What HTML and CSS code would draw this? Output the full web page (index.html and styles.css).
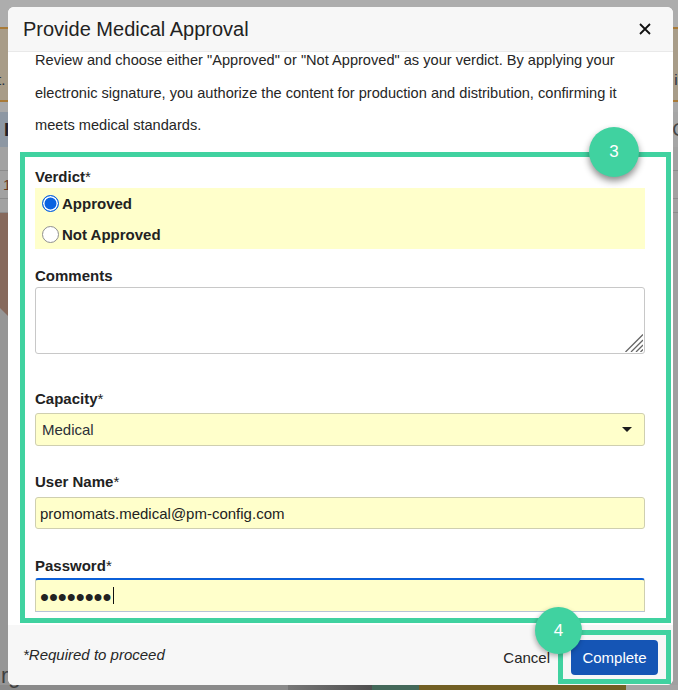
FILE: index.html
```html
<!DOCTYPE html>
<html lang="en">
<head>
<meta charset="utf-8">
<title>Provide Medical Approval</title>
<link rel="stylesheet" href="styles.css">
</head>
<body>
<div class="backdrop">
  <div class="bg-top"></div>
  <div class="bg-banner"><span class="bg-t1">t.</span><span class="bg-t2">in</span></div>
  <div class="bg-gap"></div>
  <div class="bg-bar"><span class="bg-b1">I</span><span class="bg-b2">C</span></div>
  <div class="bg-row"></div>
  <div class="bg-row bg-row-num"><span>1</span></div>
  <div class="bg-row bg-row-thin"></div>
  <div class="bg-photo"></div>
  <div class="bg-word">rg</div>
  <div class="bg-strip"><i class="s1"></i><i class="s2"></i><i class="s3"></i><i class="s4"></i></div>
</div>

<div class="modal">
  <header class="modal-head">
    <h1 class="modal-title">Provide Medical Approval</h1>
    <button class="close" type="button" aria-label="Close">
      <svg width="12" height="12" viewBox="0 0 12 12"><path d="M1 1l10 10M11 1L1 11" stroke="#111" stroke-width="1.8" fill="none"/></svg>
    </button>
  </header>
  <div class="modal-body">
    <p class="intro">Review and choose either "Approved" or "Not Approved" as your verdict. By applying your electronic signature, you authorize the content for production and distribution, confirming it meets medical standards.</p>
    <form class="form">
      <div class="label verdict-label">Verdict<span class="req">*</span></div>
      <div class="radios">
        <label class="radio"><input type="radio" name="verdict" checked>Approved</label>
        <label class="radio"><input type="radio" name="verdict">Not Approved</label>
      </div>
      <label class="label comments-label" for="comments">Comments</label>
      <div class="area-wrap">
        <textarea id="comments" class="area"></textarea>
        <svg class="grip" width="18" height="18" viewBox="0 0 18 18"><path d="M0.5 18L18 0.5M6 18L18 6M11 18l7-7M15.5 18l2.5-2.5" stroke="#666" stroke-width="1.3" fill="none"/></svg>
      </div>
      <label class="label capacity-label" for="capacity">Capacity<span class="req">*</span></label>
      <div class="select-wrap">
        <select id="capacity" class="select"><option>Medical</option></select>
        <span class="caret-down"></span>
      </div>
      <label class="label user-label" for="user">User Name<span class="req">*</span></label>
      <input id="user" class="input" type="text" value="promomats.medical@pm-config.com">
      <label class="label pass-label" for="pass">Password<span class="req">*</span></label>
      <div class="pass-wrap">
        <input id="pass" class="input input-focus" type="password" value="abcdefgh">
        <span class="text-caret"></span>
      </div>
    </form>
  </div>
  <footer class="modal-foot">
    <em class="note">*Required to proceed</em>
    <div class="actions">
      <button class="cancel" type="button">Cancel</button>
      <button class="complete" type="button">Complete</button>
    </div>
  </footer>
</div>

<div class="mark mark-form"></div>
<div class="mark mark-btn"></div>
<div class="badge badge-3">3</div>
<div class="badge badge-4">4</div>
</body>
</html>
```
FILE: styles.css
```css
* { box-sizing: border-box; }
html, body { margin: 0; height: 100%; }
body {
  position: relative;
  width: 678px;
  height: 690px;
  overflow: hidden;
  font-family: "Liberation Sans", Arial, sans-serif;
  color: #222;
  background: #a9a9a9;
}

/* dimmed page behind the dialog */
.backdrop {
  position: absolute;
  inset: 0;
  isolation: isolate;
  display: flex;
  flex-direction: column;
  background: linear-gradient(to right, #969696 0 30px, #a0a0a0 30px);
  overflow: hidden;
}
.bg-top { height: 27px; background: #adadad; flex: none; }
.bg-banner {
  height: 75px;
  flex: none;
  display: flex;
  justify-content: space-between;
  align-items: center;
  padding-top: 30px;
  background: #a89c88;
  border-top: 2px solid #a87a38;
  border-bottom: 2px solid #a87a38;
  font-size: 15px;
  color: #263040;
}
.bg-t1 { margin-left: -3px; }
.bg-t2 { margin-right: -8px; }
.bg-gap { height: 10px; background: #a9a9a9; flex: none; }
.bg-bar {
  height: 35px;
  flex: none;
  display: flex;
  justify-content: space-between;
  align-items: center;
  background: #a6a6a6;
  font-size: 19px;
  font-weight: bold;
  color: #222;
}
.bg-b1 { width: 30px; height: 100%; padding-left: 4px; line-height: 35px; background: #8d97a3; }
.bg-b2 { color: #444; font-weight: normal; margin-right: -8px; }
.bg-row { height: 24px; flex: none; background: #a2a2a2; border-bottom: 1px solid #8c8c8c; }
.bg-row-num { height: 28px; font-size: 15px; color: #6b3a20; padding: 5px 0 0 3px; }
.bg-row-thin { height: 14px; }
.bg-photo {
  width: 30px;
  height: 140px;
  flex: none;
  background: #86695c;
  clip-path: polygon(0 0, 100% 0, 100% 125px, 0 95px);
}
.bg-word {
  flex: 1;
  display: flex;
  align-items: flex-end;
  position: relative;
  z-index: 1;
  margin: 0 0 -2px 1px;
  font-size: 22px;
  line-height: 1;
  color: #3f3f3f;
}
.bg-strip { height: 5px; flex: none; display: flex; background: #8a8a8a; }
.bg-strip .s1 { margin-left: 288px; width: 84px; background: linear-gradient(to right, #777, #4f4f4f); }
.bg-strip .s2 { width: 47px; background: #44695a; }
.bg-strip .s3 { width: 207px; background: #725f24; }
.bg-strip .s4 { flex: 1; background: #a4a4a4; }

/* dialog */
.modal {
  position: absolute;
  left: 8px;
  top: 7px;
  width: 665px;
  height: 678px;
  display: flex;
  flex-direction: column;
  background: #fff;
  border-radius: 6px;
  overflow: hidden;
}
.modal-head {
  flex: none;
  height: 45px;
  display: flex;
  align-items: center;
  justify-content: space-between;
  padding: 0 22px 0 15px;
  background: #f7f7f7;
  border-bottom: 1px solid #e9e9e9;
}
.modal-title { margin: 0; font-size: 20px; font-weight: normal; color: #222; }
.close { display: flex; padding: 0; border: 0; background: none; }

.modal-body { flex: 1; min-height: 0; overflow: hidden; padding: 0 28px 0 27px; }
.intro { margin: -8px 0 0; font-size: 14.6px; line-height: 32.5px; color: #262626; }

.form { display: flex; flex-direction: column; margin-top: 26px; }
.label { display: block; font-size: 15px; font-weight: bold; line-height: 17px; color: #222; }
.req { font-weight: normal; }
.radios { height: 61px; margin-top: 3px; background: #ffffcb; padding-left: 7px; display: flex; flex-direction: column; }
.radio { display: flex; align-items: center; flex: none; height: 31px; font-size: 15px; font-weight: bold; color: #222; }
.radio input {
  appearance: none;
  width: 17px;
  height: 17px;
  margin: 0 3px 0 0;
  flex: none;
  border: 1px solid #8f8f8f;
  border-radius: 50%;
  background: #fff;
}
.radio input:checked {
  border: 1.5px solid #0b63e0;
  background: #0b63e0;
  box-shadow: inset 0 0 0 1.5px #fff;
}
.comments-label { margin-top: 18px; }
.area-wrap { position: relative; margin-top: 3px; height: 67px; }
.area {
  display: block;
  width: 100%;
  height: 100%;
  resize: none;
  border: 1px solid #c8c8c8;
  border-radius: 3px;
  background: #fff;
  outline: 0;
}
.grip { position: absolute; right: 2px; bottom: 2px; }
.capacity-label { margin-top: 36px; }
.select-wrap { position: relative; margin-top: 6px; height: 33px; }
.select {
  display: block;
  width: 100%;
  height: 100%;
  padding: 1px 0 0 6px;
  appearance: none;
  border: 1px solid #cfcfb0;
  border-radius: 3px;
  background: #ffffcb;
  font: 15px "Liberation Sans", Arial, sans-serif;
  color: #2c3038;
}
.caret-down {
  position: absolute;
  right: 13px;
  top: 14px;
  border-left: 5.5px solid transparent;
  border-right: 5.5px solid transparent;
  border-top: 5.5px solid #1c1c1c;
}
.user-label { margin-top: 27px; }
.input {
  display: block;
  width: 100%;
  height: 32px;
  margin-top: 7px;
  padding: 1px 4px 0;
  border: 1px solid #cfcfb0;
  border-radius: 3px;
  background: #ffffcb;
  font: 15px "Liberation Sans", Arial, sans-serif;
  color: #222;
  outline: 0;
}
.pass-label { margin-top: 28px; }
.pass-wrap { position: relative; }
.input-focus {
  height: 34px;
  margin-top: 4px;
  padding-top: 4px;
  border-top: 2px solid #0b5fd8;
  border-radius: 3px 3px 0 0;
  border-bottom-color: #b7c4d8;
  font-size: 25.5px;
}
.text-caret { position: absolute; left: 78px; top: 13px; width: 1px; height: 17px; background: #111; }

.modal-foot {
  flex: none;
  height: 60px;
  display: flex;
  align-items: center;
  justify-content: space-between;
  padding: 0 15px;
  background: #f7f7f7;
}
.note { font-size: 15px; color: #262626; margin-top: -2px; }
.actions { display: flex; align-items: center; gap: 21px; margin-top: 5px; }
.cancel { padding: 0; border: 0; background: none; font: 15px "Liberation Sans", Arial, sans-serif; color: #262626; }
.complete {
  width: 87px;
  height: 35px;
  padding: 0;
  border: 0;
  border-radius: 4px;
  background: #1555b5;
  color: #fff;
  font: 15px "Liberation Sans", Arial, sans-serif;
}

/* tutorial annotations */
.mark { position: absolute; border: 5px solid #40d2a0; }
.mark-form { left: 20px; top: 152px; width: 651px; height: 471px; }
.mark-btn { left: 558px; top: 630px; width: 113px; height: 54px; }
.badge {
  position: absolute;
  display: flex;
  align-items: center;
  justify-content: center;
  border-radius: 50%;
  background: #40d2a0;
  color: #fff;
  font-size: 17px;
  box-shadow: 0 4px 7px rgba(0, 0, 0, 0.45);
}
.badge-3 { left: 589px; top: 127px; width: 50px; height: 50px; }
.badge-4 { left: 535px; top: 607px; width: 47px; height: 47px; box-shadow: -1px 2px 5px rgba(0, 0, 0, 0.3); }
```
